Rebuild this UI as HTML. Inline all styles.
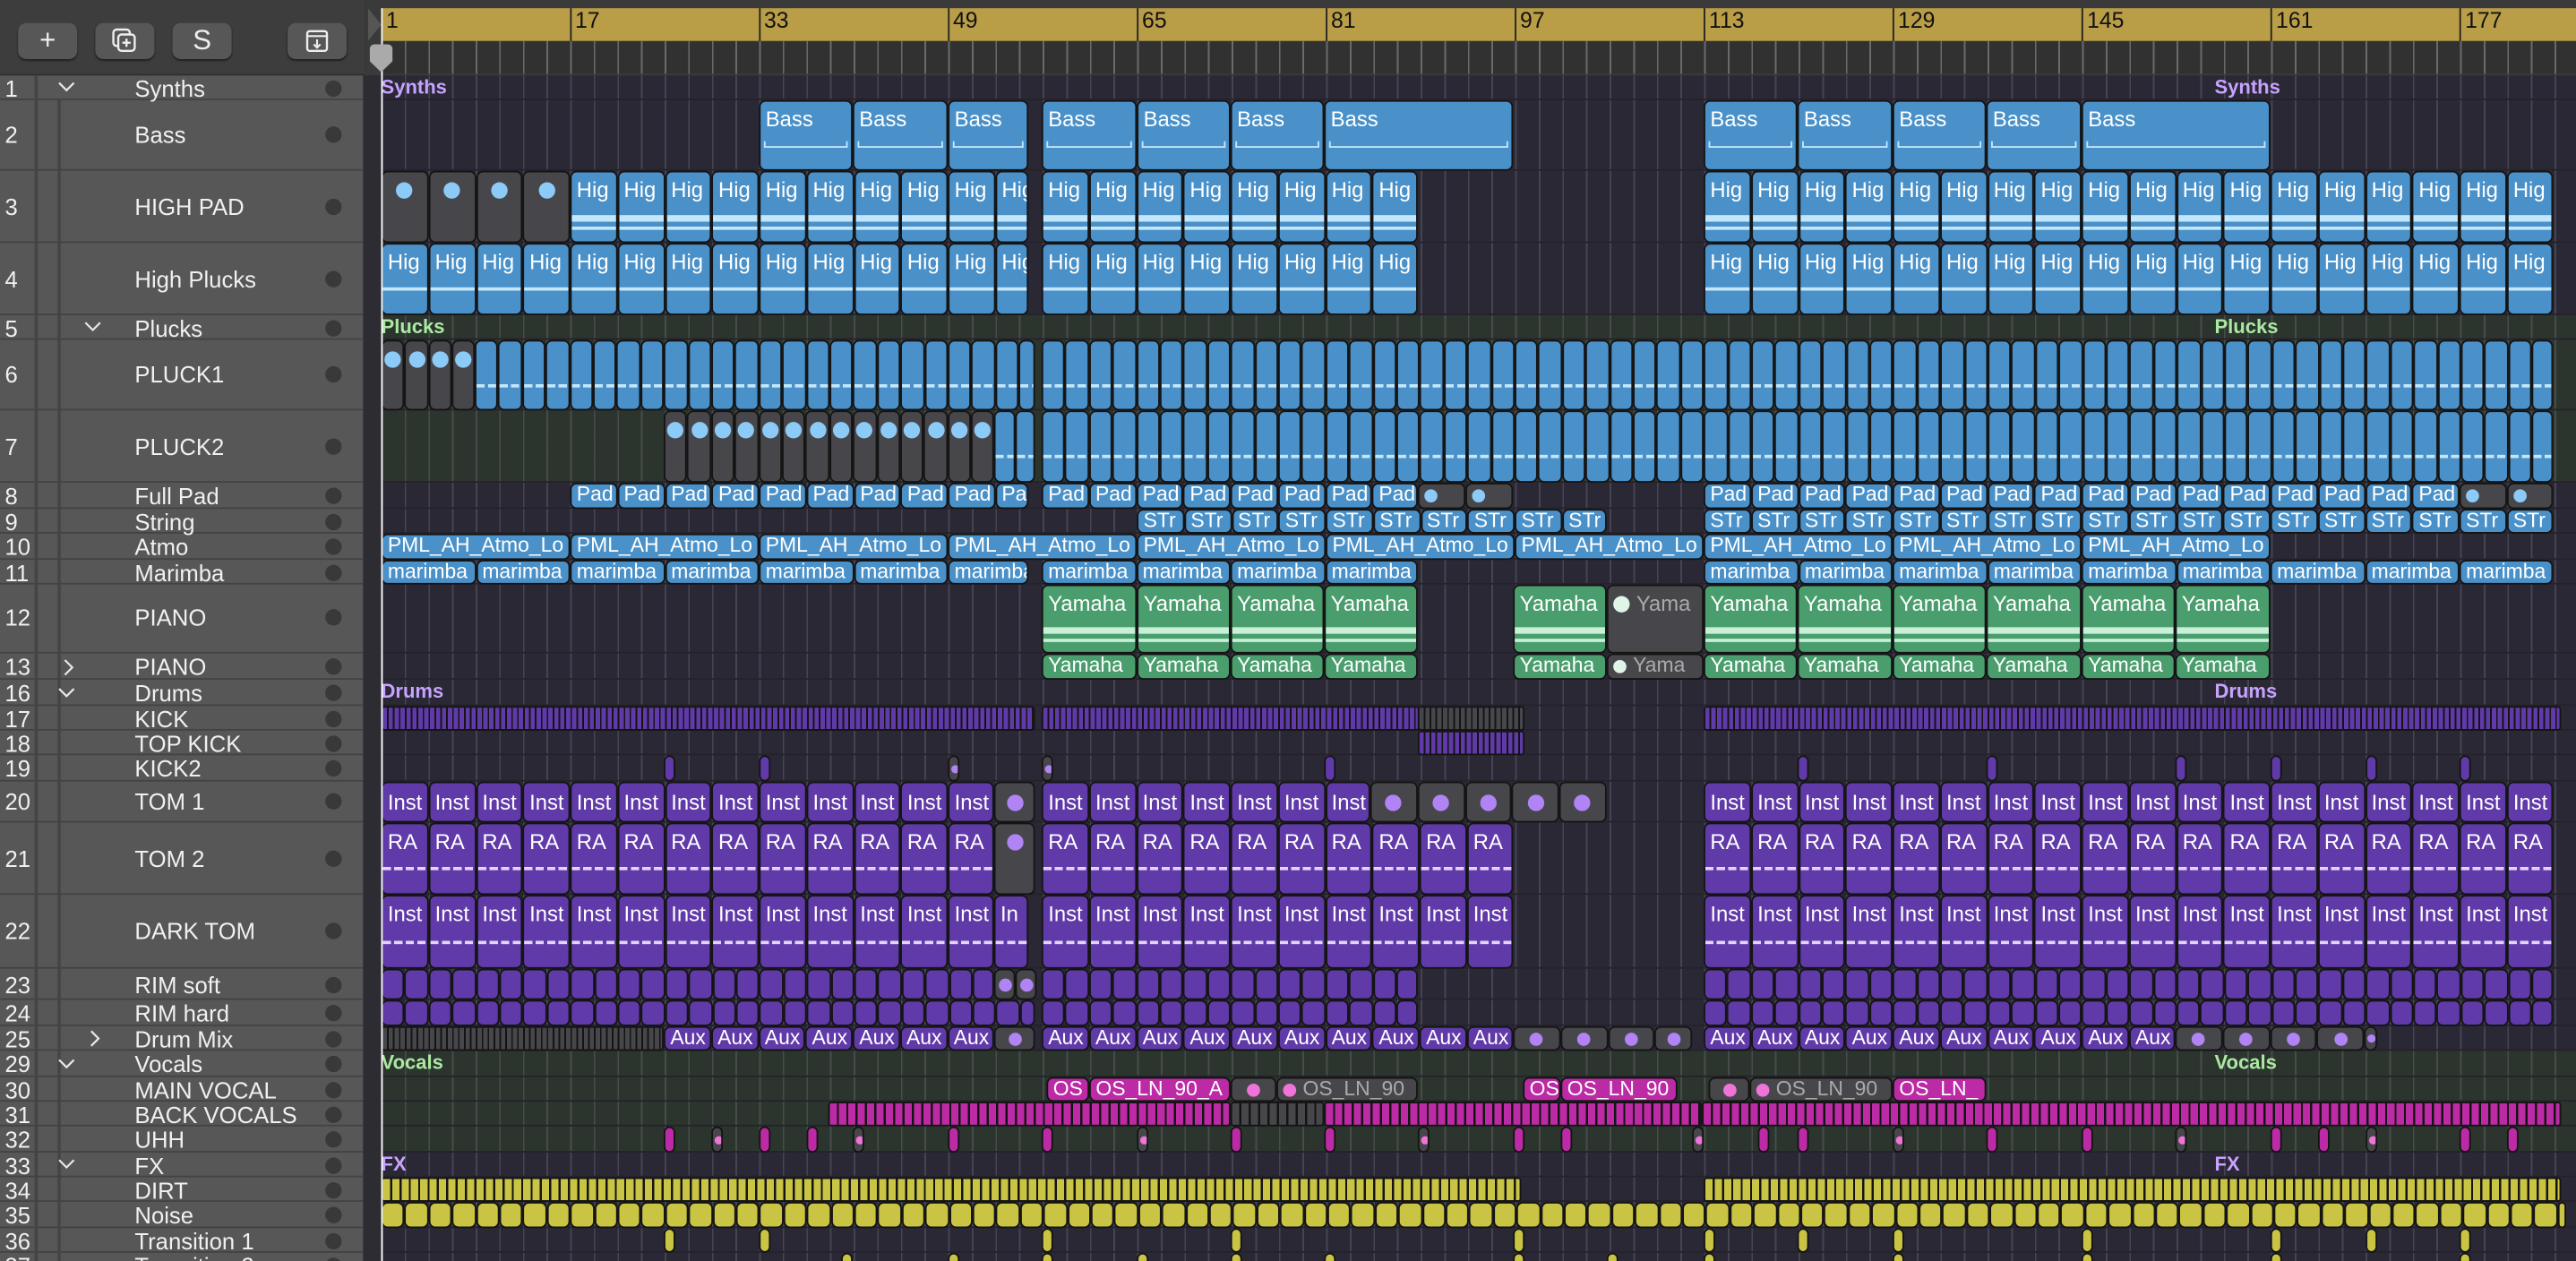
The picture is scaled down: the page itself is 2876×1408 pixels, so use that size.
<!DOCTYPE html>
<html><head><meta charset="utf-8">
<style>
html,body{margin:0;padding:0;background:#2b2836;overflow:hidden;}
#root{position:absolute;left:0;top:0;width:1568px;height:768px;transform-origin:0 0;transform:scale(1.83418,1.83333);background:#2b2836;font-family:"Liberation Sans",sans-serif;overflow:hidden;}
.a{position:absolute;box-sizing:border-box;}
.btn{position:absolute;top:14px;height:22px;width:36px;background:#575757;border-radius:5px;box-shadow:0 1px 1px #222;color:#eee;text-align:center;font-size:17px;line-height:22px;}
.tr{position:absolute;left:0;width:221px;box-sizing:border-box;border-bottom:1.5px solid #434343;color:#f0f0f0;font-size:14px;}
.tr .n{position:absolute;left:3px;font-size:14px;}
.tr .nm{position:absolute;left:82px;white-space:nowrap;}
.tr .dot{position:absolute;left:198px;width:10px;height:10px;border-radius:50%;background:#393939;}
.tr .ch{position:absolute;}
.r{position:absolute;box-sizing:border-box;border:1.3px solid #141414;border-radius:4px;overflow:hidden;color:#fff;font-size:13px;white-space:nowrap;padding-left:3px;line-height:15px;}
.r.sm{font-size:12.5px;line-height:13px;}
.fl{position:absolute;font-weight:bold;font-size:12px;}
.num{position:absolute;top:5px;font-size:13.5px;color:#111;}
</style></head><body>
<div id="root">
<div class="a" style="left:0;top:0;width:222px;height:46px;background:#3d3d3d;border-bottom:1px solid #2e2e2e"></div>
<div class="btn" style="left:11px">+</div>
<div class="btn" style="left:58px"><svg width="20" height="18" viewBox="0 0 20 18" style="margin-top:2px"><rect x="3" y="2" width="10" height="10" rx="2" fill="none" stroke="#eee" stroke-width="1.3"/><rect x="6" y="5" width="10" height="10" rx="2" fill="#575757" stroke="#eee" stroke-width="1.3"/><path d="M11 7.5v5M8.5 10h5" stroke="#eee" stroke-width="1.3"/></svg></div>
<div class="btn" style="left:105px">S</div>
<div class="btn" style="left:175px"><svg width="18" height="18" viewBox="0 0 18 18" style="margin-top:2px"><rect x="3" y="3" width="12" height="12" rx="1.5" fill="none" stroke="#eee" stroke-width="1.3"/><path d="M3 6h12M9 8v5M7 11l2 2 2-2" fill="none" stroke="#eee" stroke-width="1.2"/></svg></div>
<div class="a" style="left:222px;top:0;width:1346px;height:46px;background:#3a3a3a"></div>
<div class="a" style="left:224px;top:5px;width:8px;height:20px;background:#555;clip-path:polygon(0 0,100% 50%,0 100%)"></div>
<div class="a" style="left:232px;top:5px;width:1336px;height:20px;background:#b99d47"></div>
<div class="a" style="left:232px;top:25px;width:1336px;height:20px;background:#313131 repeating-linear-gradient(90deg,#6a6a6a 0 1px,transparent 1px 14.38px)"></div>
<div id="rnum"></div>
<div class="a" style="left:221px;top:46px;width:11px;height:722px;background:#2e2c33"></div>
<div class="a" style="left:232px;top:192px;width:1336px;height:102px;background:#2c352d"></div>
<div class="a" style="left:232px;top:640px;width:1336px;height:62px;background:#2c352d"></div>
<div class="a" style="left:232px;top:46px;width:1336px;height:722px;background:repeating-linear-gradient(90deg,rgba(120,120,135,.35) 0 1px,transparent 1px 14.38px)"></div>
<div id="rowlines"></div>
<div id="regs"></div>
<div class="fl" style="left:232px;top:46px;color:#c7a3ff">Synths</div>
<div class="fl" style="left:1348px;top:46px;color:#c7a3ff">Synths</div>
<div class="fl" style="left:232px;top:192px;color:#abe9a3">Plucks</div>
<div class="fl" style="left:1348px;top:192px;color:#abe9a3">Plucks</div>
<div class="fl" style="left:232px;top:414px;color:#c7a3ff">Drums</div>
<div class="fl" style="left:1348px;top:414px;color:#c7a3ff">Drums</div>
<div class="fl" style="left:232px;top:640px;color:#abe9a3">Vocals</div>
<div class="fl" style="left:1348px;top:640px;color:#abe9a3">Vocals</div>
<div class="fl" style="left:232px;top:702px;color:#c7a3ff">FX</div>
<div class="fl" style="left:1348px;top:702px;color:#c7a3ff">FX</div>
<div class="a" style="left:0;top:46px;width:221px;height:722px;background:#575757"></div>
<div class="a" style="left:21px;top:46px;width:1.5px;height:722px;background:#454545"></div>
<div class="a" style="left:35px;top:61px;width:1.5px;height:707px;background:#454545"></div>
<div class="tr" style="top:46px;height:15px"><span class="n" style="top:0">1</span><svg class="ch" style="left:35px;top:3px" width="11" height="8" viewBox="0 0 11 8"><path d="M1 1.5l4.5 4.5 4.5-4.5" fill="none" stroke="#e8e8e8" stroke-width="1.2"/></svg><span class="nm" style="top:0">Synths</span><span class="dot" style="top:3px"></span></div>
<div class="tr" style="top:61px;height:43px"><span class="n" style="top:13px">2</span><span class="nm" style="top:13px">Bass</span><span class="dot" style="top:16px"></span></div>
<div class="tr" style="top:104px;height:44px"><span class="n" style="top:14px">3</span><span class="nm" style="top:14px">HIGH PAD</span><span class="dot" style="top:17px"></span></div>
<div class="tr" style="top:148px;height:44px"><span class="n" style="top:14px">4</span><span class="nm" style="top:14px">High Plucks</span><span class="dot" style="top:17px"></span></div>
<div class="tr" style="top:192px;height:15px"><span class="n" style="top:0">5</span><svg class="ch" style="left:51px;top:3px" width="11" height="8" viewBox="0 0 11 8"><path d="M1 1.5l4.5 4.5 4.5-4.5" fill="none" stroke="#e8e8e8" stroke-width="1.2"/></svg><span class="nm" style="top:0">Plucks</span><span class="dot" style="top:3px"></span></div>
<div class="tr" style="top:207px;height:43px"><span class="n" style="top:13px">6</span><span class="nm" style="top:13px">PLUCK1</span><span class="dot" style="top:16px"></span></div>
<div class="tr" style="top:250px;height:44px"><span class="n" style="top:14px">7</span><span class="nm" style="top:14px">PLUCK2</span><span class="dot" style="top:17px"></span></div>
<div class="tr" style="top:294px;height:16px"><span class="n" style="top:0">8</span><span class="nm" style="top:0">Full Pad</span><span class="dot" style="top:3px"></span></div>
<div class="tr" style="top:310px;height:15px"><span class="n" style="top:0">9</span><span class="nm" style="top:0">String</span><span class="dot" style="top:3px"></span></div>
<div class="tr" style="top:325px;height:16px"><span class="n" style="top:0">10</span><span class="nm" style="top:0">Atmo</span><span class="dot" style="top:3px"></span></div>
<div class="tr" style="top:341px;height:15px"><span class="n" style="top:0">11</span><span class="nm" style="top:0">Marimba</span><span class="dot" style="top:3px"></span></div>
<div class="tr" style="top:356px;height:42px"><span class="n" style="top:12px">12</span><span class="nm" style="top:12px">PIANO</span><span class="dot" style="top:15px"></span></div>
<div class="tr" style="top:398px;height:16px"><span class="n" style="top:0">13</span><svg class="ch" style="left:38px;top:3px" width="8" height="11" viewBox="0 0 8 11"><path d="M1.5 1l4.5 4.5-4.5 4.5" fill="none" stroke="#e8e8e8" stroke-width="1.2"/></svg><span class="nm" style="top:0">PIANO</span><span class="dot" style="top:3px"></span></div>
<div class="tr" style="top:414px;height:16px"><span class="n" style="top:0">16</span><svg class="ch" style="left:35px;top:4px" width="11" height="8" viewBox="0 0 11 8"><path d="M1 1.5l4.5 4.5 4.5-4.5" fill="none" stroke="#e8e8e8" stroke-width="1.2"/></svg><span class="nm" style="top:0">Drums</span><span class="dot" style="top:3px"></span></div>
<div class="tr" style="top:430px;height:15px"><span class="n" style="top:0">17</span><span class="nm" style="top:0">KICK</span><span class="dot" style="top:3px"></span></div>
<div class="tr" style="top:445px;height:15px"><span class="n" style="top:0">18</span><span class="nm" style="top:0">TOP KICK</span><span class="dot" style="top:3px"></span></div>
<div class="tr" style="top:460px;height:16px"><span class="n" style="top:0">19</span><span class="nm" style="top:0">KICK2</span><span class="dot" style="top:3px"></span></div>
<div class="tr" style="top:476px;height:25px"><span class="n" style="top:4px">20</span><span class="nm" style="top:4px">TOM 1</span><span class="dot" style="top:7px"></span></div>
<div class="tr" style="top:501px;height:44px"><span class="n" style="top:14px">21</span><span class="nm" style="top:14px">TOM 2</span><span class="dot" style="top:17px"></span></div>
<div class="tr" style="top:545px;height:45px"><span class="n" style="top:14px">22</span><span class="nm" style="top:14px">DARK TOM</span><span class="dot" style="top:17px"></span></div>
<div class="tr" style="top:590px;height:19px"><span class="n" style="top:2px">23</span><span class="nm" style="top:2px">RIM soft</span><span class="dot" style="top:5px"></span></div>
<div class="tr" style="top:609px;height:16px"><span class="n" style="top:0">24</span><span class="nm" style="top:0">RIM hard</span><span class="dot" style="top:3px"></span></div>
<div class="tr" style="top:625px;height:15px"><span class="n" style="top:0">25</span><svg class="ch" style="left:54px;top:2px" width="8" height="11" viewBox="0 0 8 11"><path d="M1.5 1l4.5 4.5-4.5 4.5" fill="none" stroke="#e8e8e8" stroke-width="1.2"/></svg><span class="nm" style="top:0">Drum Mix</span><span class="dot" style="top:3px"></span></div>
<div class="tr" style="top:640px;height:16px"><span class="n" style="top:0">29</span><svg class="ch" style="left:35px;top:4px" width="11" height="8" viewBox="0 0 11 8"><path d="M1 1.5l4.5 4.5 4.5-4.5" fill="none" stroke="#e8e8e8" stroke-width="1.2"/></svg><span class="nm" style="top:0">Vocals</span><span class="dot" style="top:3px"></span></div>
<div class="tr" style="top:656px;height:15px"><span class="n" style="top:0">30</span><span class="nm" style="top:0">MAIN VOCAL</span><span class="dot" style="top:3px"></span></div>
<div class="tr" style="top:671px;height:15px"><span class="n" style="top:0">31</span><span class="nm" style="top:0">BACK VOCALS</span><span class="dot" style="top:3px"></span></div>
<div class="tr" style="top:686px;height:16px"><span class="n" style="top:0">32</span><span class="nm" style="top:0">UHH</span><span class="dot" style="top:3px"></span></div>
<div class="tr" style="top:702px;height:15px"><span class="n" style="top:0">33</span><svg class="ch" style="left:35px;top:3px" width="11" height="8" viewBox="0 0 11 8"><path d="M1 1.5l4.5 4.5 4.5-4.5" fill="none" stroke="#e8e8e8" stroke-width="1.2"/></svg><span class="nm" style="top:0">FX</span><span class="dot" style="top:3px"></span></div>
<div class="tr" style="top:717px;height:15px"><span class="n" style="top:0">34</span><span class="nm" style="top:0">DIRT</span><span class="dot" style="top:3px"></span></div>
<div class="tr" style="top:732px;height:16px"><span class="n" style="top:0">35</span><span class="nm" style="top:0">Noise</span><span class="dot" style="top:3px"></span></div>
<div class="tr" style="top:748px;height:15px"><span class="n" style="top:0">36</span><span class="nm" style="top:0">Transition 1</span><span class="dot" style="top:3px"></span></div>
<div class="tr" style="top:763px;height:15px"><span class="n" style="top:0">37</span><span class="nm" style="top:0">Transition 2</span><span class="dot" style="top:3px"></span></div>
<div class="a" style="left:231.5px;top:5px;width:1px;height:763px;background:#fff"></div>
<div class="a" style="left:225px;top:27px;width:14px;height:17px;background:#aaa;border-radius:3px 3px 0 0;clip-path:polygon(0 0,100% 0,100% 60%,50% 100%,0 60%)"></div>
</div>
<script>
(function(){
var rn=document.getElementById('rnum');
[1,17,33,49,65,81,97,113,129,145,161,177].forEach(function(b){var x=232+(b-1)*7.19;
 var l=document.createElement('div');l.className='a';l.style.cssText='left:'+x+'px;top:5px;width:1px;height:20px;background:#222';rn.appendChild(l);
 var t=document.createElement('div');t.className='num';t.style.left=(x+3)+'px';t.textContent=b;rn.appendChild(t);});
var R={1:[46,15],2:[61,43],3:[104,44],4:[148,44],5:[192,15],6:[207,43],7:[250,44],8:[294,16],9:[310,15],10:[325,16],11:[341,15],12:[356,42],13:[398,16],16:[414,16],17:[430,15],18:[445,15],19:[460,16],20:[476,25],21:[501,44],22:[545,45],23:[590,19],24:[609,16],25:[625,15],29:[640,16],30:[656,15],31:[671,15],32:[686,16],33:[702,15],34:[717,15],35:[732,16],36:[748,15],37:[763,15]};
var rl=document.getElementById('rowlines');
for(var k in R){var d=document.createElement('div');d.className='a';d.style.cssText='left:232px;top:'+(R[k][0]+R[k][1]-1)+'px;width:1336px;height:1px;background:#24222b';rl.appendChild(d);}
var C={b:'#4a91c9',p:'#603aa8',k:'#bd2aa5',y:'#c9c443',g:'#4a9e6e',d:'#47474b'};
var DOT={b:'#8ccaf7',p:'#b084f5',k:'#f074d8',g:'#e0f5e8',y:'#e8e070'};
var LINE={b:'#c4e6fb',p:'#e3d4ff',g:'#c8f0d8',d:'#a0a0a0'};
var box=document.getElementById('regs');
function add(r,x,w,c,lab,ex,dc){
 var y=R[r][0],h=R[r][1];
 var e=document.createElement('div');e.className='r'+(h<20?' sm':'');
 var bg=C[c];
 var s='left:'+x+'px;top:'+y+'px;width:'+w+'px;height:'+h+'px;background:'+bg+';';
 if(h>20)s+='padding-top:'+(h>30?3:4)+'px;';
 if(ex=='stripe'){s+='background:repeating-linear-gradient(90deg,'+bg+' 0 2.6px,#141414 2.6px 3.6px);border-radius:2px;';}
 if(ex=='stripe2'){s+='background:repeating-linear-gradient(90deg,'+bg+' 0 4.4px,#141414 4.4px 5.7px);border-radius:2px;';}
 e.style.cssText=s;
 if(lab){var t=document.createElement('span');t.textContent=lab;if(c=='d')t.style.color='#aaa';e.appendChild(t);}
 if(ex=='dot'||ex=='dotl'){var o=document.createElement('div');var sz=h>20?10:(w<10?5:8);o.style.cssText='position:absolute;left:'+Math.max(1,(ex=='dotl'?3:(w-sz)/2-1))+'px;top:'+(h>30?6:(h-sz)/2-1)+'px;width:'+sz+'px;height:'+sz+'px;border-radius:50%;background:'+DOT[dc||'b'];e.appendChild(o);if(lab){e.firstChild.style.marginLeft=(sz+4)+'px';}}
 if(ex=='line1'||ex=='line2'||ex=='dash'||ex=='wave'){
  var lc=LINE[c]||'#ccc';
  var L=document.createElement('div');
  var top=Math.round(h*(ex=='wave'?0.5:0.6));
  L.style.cssText='position:absolute;left:0;right:0;top:'+top+'px;height:'+(ex=='line2'?4:2)+'px;background:'+lc;
  if(ex=='dash')L.style.background='repeating-linear-gradient(90deg,'+lc+' 0 5px,transparent 5px 7px)';
  if(ex=='wave'){L.style.cssText='position:absolute;left:2px;right:2px;top:'+(h*0.55)+'px;height:3px;border-bottom:1.5px solid '+lc+';border-left:1.5px solid '+lc+';border-right:1.5px solid '+lc;}
  e.appendChild(L);
  if(ex=='line2'){var L2=document.createElement('div');L2.style.cssText='position:absolute;left:0;right:0;top:'+(top+7)+'px;height:2px;background:'+lc;e.appendChild(L2);}
 }
 box.appendChild(e);
}
function reg(r,x1,x2,w,c,lab,ex,dc){for(var x=x1;x<x2-1;x+=w){add(r,x,Math.min(w,x2-x),c,lab,ex,dc);}}
function L(r,arr,c,lab,ex,dc){arr.forEach(function(p){add(r,p[0],p[1]-p[0],c,lab,ex,dc);});}
L(2,[[462,519],[519,577],[577,626],[634,692],[692,749],[749,806],[806,921],[1037,1094],[1094,1152],[1152,1209],[1209,1267],[1267,1382]],'b','Bass','wave');
reg(3,232,347,28.75,'d','','dot','b');
reg(3,347,626,28.75,'b','Hig','line2');reg(3,634,863,28.75,'b','Hig','line2');reg(3,1037,1554,28.75,'b','Hig','line2');
reg(4,232,626,28.75,'b','Hig','line1');reg(4,634,863,28.75,'b','Hig','line1');reg(4,1037,1554,28.75,'b','Hig','line1');
reg(6,232,289,14.4,'d','','dot','b');reg(6,289,630,14.4,'b','','dash');reg(6,634,1554,14.4,'b','','dash');
reg(7,404,605,14.4,'d','','dot','b');reg(7,605,630,12.5,'b','','dash');reg(7,634,1554,14.4,'b','','dash');
reg(8,347,626,28.75,'b','Pad');reg(8,634,863,28.75,'b','Pad');reg(8,863,921,28.75,'d','','dotl','b');reg(8,1037,1497,28.75,'b','Pad');reg(8,1497,1554,28.75,'d','','dotl','b');
reg(9,692,978,28.75,'b','STr');reg(9,1037,1554,28.75,'b','STr');
reg(10,232,1037,115,'b','PML_AH_Atmo_Lo');reg(10,1037,1382,115,'b','PML_AH_Atmo_Lo');
reg(11,232,626,57.5,'b','marimba');reg(11,634,863,57.5,'b','marimba');reg(11,1037,1554,57.5,'b','marimba');
L(12,[[634,692],[692,749],[749,806],[806,863],[921,978],[1037,1094],[1094,1152],[1152,1209],[1209,1267],[1267,1324],[1324,1382]],'g','Yamaha','line2');
add(12,978,59,'d','Yama','dotl','g');
L(13,[[634,692],[692,749],[749,806],[806,863],[921,978],[1037,1094],[1094,1152],[1152,1209],[1209,1267],[1267,1324],[1324,1382]],'g','Yamaha');
add(13,978,59,'d','Yama','dotl','g');
add(17,232,398,'p','','stripe');add(17,634,230,'p','','stripe');add(17,863,65,'d','','stripe');add(17,1037,522,'p','','stripe');
add(18,863,65,'p','','stripe');
[404,462,806,1094,1209,1324,1382,1440,1497].forEach(function(x){add(19,x,7,'p');});
add(19,577,7,'d','','dot','p');add(19,634,7,'d','','dot','p');
reg(20,232,605,28.75,'p','Inst');add(20,605,25,'d','','dot','p');reg(20,634,834,28.75,'p','Inst');reg(20,834,978,28.75,'d','','dot','p');reg(20,1037,1554,28.75,'p','Inst');
reg(21,232,605,28.75,'p','RA','dash');add(21,605,25,'d','','dot','p');reg(21,634,921,28.75,'p','RA','dash');reg(21,1037,1554,28.75,'p','RA','dash');
reg(22,232,605,28.75,'p','Inst','dash');add(22,605,21,'p','In','dash');reg(22,634,921,28.75,'p','Inst','dash');reg(22,1037,1554,28.75,'p','Inst','dash');
reg(23,232,605,14.4,'p');reg(23,605,631,13,'d','','dot','p');reg(23,634,863,14.4,'p');reg(23,1037,1554,14.4,'p');
reg(24,232,630,14.4,'p');reg(24,634,863,14.4,'p');reg(24,1037,1554,14.4,'p');
add(25,232,172,'d','','stripe');reg(25,404,605,28.75,'p','Aux');add(25,605,25,'d','','dot','p');reg(25,634,921,28.75,'p','Aux');reg(25,921,1030,28.75,'d','','dot','p');reg(25,1037,1324,28.75,'p','Aux');reg(25,1324,1447,28.75,'d','','dot','p');
L(30,[[637,663],[927,950]],'k','OS');add(30,663,86,'k','OS_LN_90_A');add(30,950,71,'k','OS_LN_90');add(30,1152,57,'k','OS_LN_');
add(30,749,28,'d','','dot','k');add(30,1040,25,'d','','dot','k');
add(30,777,86,'d','OS_LN_90','dotl','k');add(30,1065,87,'d','OS_LN_90','dotl','k');
add(31,504,245,'k','','stripe2');add(31,749,57,'d','','stripe2');add(31,806,230,'k','','stripe2');add(31,1036,523,'k','','stripe2');
[404,433,462,491,519,577,634,692,749,806,863,921,950,1030,1070,1094,1152,1209,1267,1324,1382,1411,1440,1497,1526].forEach(function(x,i){if(i%3==1)add(32,x,7,'d','','dot','k');else add(32,x,7,'k');});
add(34,232,694,'y','','stripe2');add(34,1037,522,'y','','stripe2');
reg(35,232,1559,14.4,'y');
[404,462,634,749,921,1037,1094,1152,1267,1382,1440,1497].forEach(function(x){add(36,x,7,'y');});
[512,577,634,692,749,806,921,978,1037,1152,1267,1382,1497].forEach(function(x){add(37,x,7,'y');});
})();
</script>
</body></html>
